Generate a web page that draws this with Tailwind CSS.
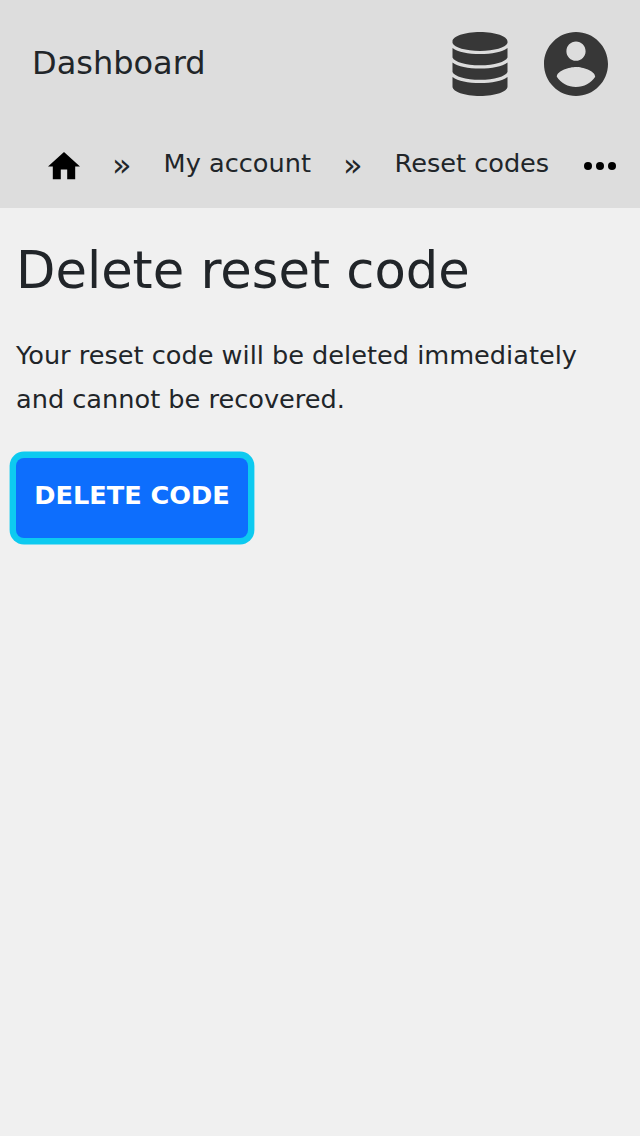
<!DOCTYPE html>
<html lang="en">
<head>
<meta charset="utf-8">
<title>Delete reset code</title>
<script src="https://cdn.jsdelivr.net/npm/@tailwindcss/browser@4"></script>
</head>
<body class="min-h-screen bg-[#f0f0f0] text-[#212529] font-['DejaVu_Sans',sans-serif] text-[25.6px] leading-[44px]">
<header class="h-[208px] bg-[#dddddd]">
  <div class="flex h-32 items-center justify-between px-8">
    <a class="text-[32px] leading-[48px] -mt-[2px]">Dashboard</a>
    <div class="flex gap-8 text-[#373737]">
      <svg class="size-16" viewBox="0 0 64 64" fill="currentColor"><path d="M4.500 9.500C4.500 4.300 16.500 0 32 0s27.500 4.300 27.500 9.500v1.500C57.500 15.500 46.500 18.900 32 18.900S6.500 15.500 4.500 11zM4.500 16C10 20 20 22.100 32 22.100s22-2.100 27.500-6.100v9.500C57.500 30 46.500 33.300 32 33.300S6.500 30 4.500 25.500zM4.500 30.500C10 34.500 20 36.600 32 36.600s22-2.100 27.500-6.100v9.500C57.500 44.500 46.500 47.800 32 47.800S6.500 44.500 4.500 40zM4.500 45C10 49 20 51.100 32 51.100s22-2.100 27.500-6.100v9.500C59.500 59.700 47.500 64 32 64S4.500 59.700 4.500 54.500z"/></svg>
      <svg class="size-16" viewBox="2 2 20 20" fill="currentColor"><path d="M12 2C6.480 2 2 6.480 2 12s4.480 10 10 10 10-4.480 10-10S17.520 2 12 2zm0 3c1.660 0 3 1.340 3 3s-1.340 3-3 3-3-1.340-3-3 1.340-3 3-3zm0 14.200c-2.500 0-4.710-1.280-6-3.220.03-1.990 4-3.080 6-3.080s5.970 1.090 6 3.080c-1.290 1.940-3.500 3.220-6 3.220z"/></svg>
    </div>
  </div>
  <nav class="flex h-20 items-start pl-12 pt-[13px]">
    <svg class="mt-[11.400px] w-8 h-[27.2px] text-black" viewBox="2 3 20 17" fill="currentColor"><path d="M10 20v-6h4v6h5v-8h3L12 3 2 12h3v8z"/></svg>
    <span class="ml-8 mt-[2px] w-[51.6px] text-[32px]">»</span><a>My account</a>
    <span class="ml-8 mt-[2px] w-[51.6px] text-[32px]">»</span><a>Reset codes</a>
    <svg class="ml-[34.8px] mt-[21px] w-8 h-2 text-black" viewBox="0 0 32 8"><circle cx="4" cy="4" r="4"/><circle cx="16" cy="4" r="4"/><circle cx="28" cy="4" r="4"/></svg>
  </nav>
</header>
<main class="px-4 pt-8">
  <h1 class="text-[51.2px] leading-[61px]">Delete reset code</h1>
  <p class="mt-8 w-[600px]">Your reset code will be deleted immediately and cannot be recovered.</p>
  <button class="mt-[37px] h-20 w-[232px] rounded-lg bg-[#0d6efd] pb-1.5 font-bold text-white shadow-[0_0_0_6.4px_#0dcaf0]">DELETE CODE</button>
</main>
</body>
</html>
